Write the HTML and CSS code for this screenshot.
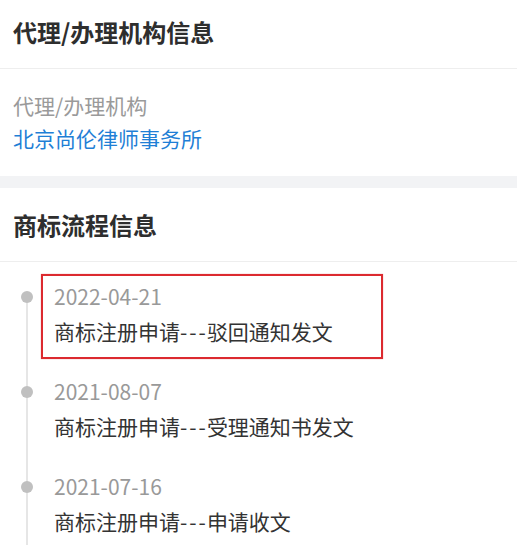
FILE: index.html
```html
<!DOCTYPE html>
<html lang="zh-CN">
<head>
<meta charset="utf-8">
<title>代理/办理机构信息</title>
<link rel="stylesheet" href="styles.css">
</head>
<body>
<section class="card">
  <h2 class="card-title first">代理/办理机构信息</h2>
  <div class="agency">
    <div class="agency-label">代理/办理机构</div>
    <div class="agency-name">北京尚伦律师事务所</div>
  </div>
</section>
<section class="card">
  <h2 class="card-title">商标流程信息</h2>
  <ul class="timeline">
    <li class="tl-item">
      <div class="tl-rail"><span class="tl-dot"></span></div>
      <div class="tl-body highlight">
        <div class="tl-date">2022-04-21</div>
        <div class="tl-desc">商标注册申请<span class="sep">---</span>驳回通知发文</div>
      </div>
    </li>
    <li class="tl-item">
      <div class="tl-rail"><span class="tl-dot"></span></div>
      <div class="tl-body">
        <div class="tl-date">2021-08-07</div>
        <div class="tl-desc">商标注册申请<span class="sep">---</span>受理通知书发文</div>
      </div>
    </li>
    <li class="tl-item">
      <div class="tl-rail"><span class="tl-dot"></span></div>
      <div class="tl-body">
        <div class="tl-date">2021-07-16</div>
        <div class="tl-desc">商标注册申请<span class="sep">---</span>申请收文</div>
      </div>
    </li>
  </ul>
</section>
</body>
</html>
```

FILE: styles.css
```css
* { box-sizing: border-box; }
html, body {
  margin: 0;
  padding: 0;
}
body {
  background: #f2f3f5;
  font-family: "Noto Sans CJK SC", "Noto Sans", sans-serif;
  display: flex;
  flex-direction: column;
  gap: 12px;
  overflow: hidden;
}
.card {
  background: #ffffff;
}
.card-title {
  margin: 0;
  padding: 19px 13px 18px;
  font-size: 24px;
  line-height: 36px;
  font-weight: 700;
  color: #2e2e2e;
  border-bottom: 1px solid #eeeeee;
}
.card-title.first {
  padding-top: 14px;
}
.agency {
  padding: 20px 13px 21px;
  font-size: 21px;
  line-height: 33px;
}
.agency-label {
  color: #9a9a9a;
}
.agency-name {
  color: #1f7fd6;
}
.timeline {
  list-style: none;
  margin: 0;
  padding: 17px 0 0;
}
.tl-item {
  display: grid;
  grid-template-columns: 54px 1fr;
}
.tl-rail {
  display: flex;
  justify-content: center;
  background: linear-gradient(#e6e6e6, #e6e6e6) no-repeat center 0 / 2px 100%;
}
.tl-item:first-child .tl-rail {
  background-position: center 17px;
}
.tl-dot {
  width: 12px;
  height: 12px;
  margin-top: 12px;
  border-radius: 50%;
  background: #c0c0c0;
}
.tl-body {
  position: relative;
  padding-bottom: 25px;
  font-size: 21px;
  line-height: 35px;
}
.tl-date {
  color: #999999;
}
.tl-desc {
  color: #333333;
}
.sep {
  letter-spacing: 2px;
  margin-right: -1px;
}
.highlight::after {
  content: "";
  position: absolute;
  left: -13px;
  top: -5px;
  width: 338px;
  height: 81px;
  border: 2px solid #dc2a2f;
  box-shadow: 0 0 1px rgba(220, 42, 47, 0.5);
  pointer-events: none;
}
```
